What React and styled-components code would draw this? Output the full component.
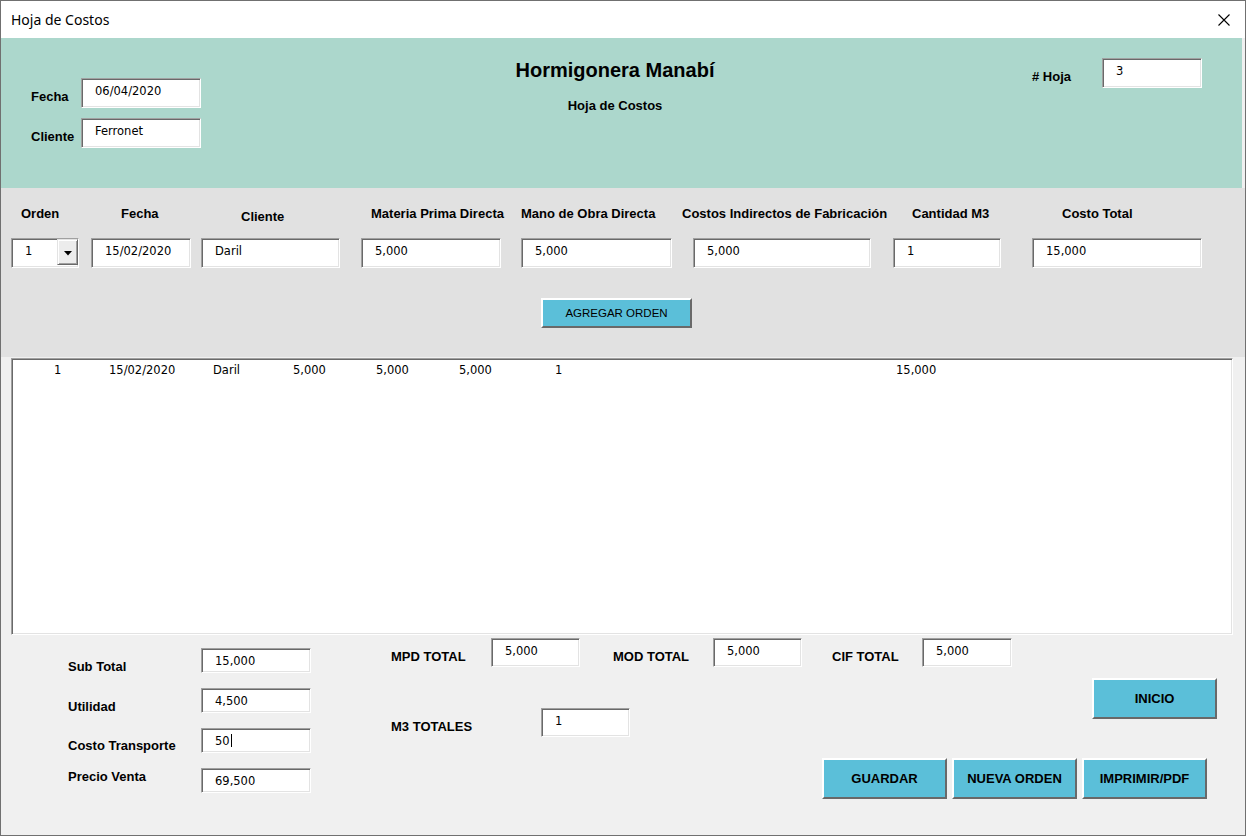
import React from "react";
import styled, { createGlobalStyle } from "styled-components";

const GlobalStyle = createGlobalStyle`
  html, body { margin: 0; padding: 0; background: #f0f0f0; }
  * { box-sizing: border-box; }
`;

const Window = styled.div`
  width: 1246px;
  height: 836px;
  border: 1px solid #707070;
  background: #f0f0f0;
  display: flex;
  flex-direction: column;
  overflow: hidden;
  font-family: "Liberation Sans", Arial, sans-serif;
  color: #000;
`;

const TitleBar = styled.div`
  height: 37px;
  flex: none;
  background: #fff;
  display: flex;
  align-items: center;
  justify-content: space-between;
  padding: 0 15px 0 10px;
  font-family: "Noto Sans", "Open Sans", sans-serif;
  font-size: 14px;
`;

const Header = styled.section`
  height: 150px;
  flex: none;
  margin-right: 3px;
  background: #acd7cc;
  display: grid;
  grid-template-columns: 300px 628px 1fr;
`;

const HeadLeft = styled.div`
  padding: 40px 0 0 30px;
  display: flex;
  flex-direction: column;
  gap: 10px;
`;

const HeadCenter = styled.div`
  padding-top: 20px;
  display: flex;
  flex-direction: column;
  align-items: center;
`;

const CompanyName = styled.h1`
  margin: 0;
  font-size: 20px;
  line-height: 24px;
  font-weight: 700;
`;

const SheetName = styled.div`
  margin-top: 16px;
  font-size: 13px;
  line-height: 15px;
  font-weight: 700;
`;

const HeadRight = styled.div`
  padding: 20px 0 0 103px;
  display: flex;
  align-items: flex-start;
`;

const Row = styled.div`
  display: flex;
  align-items: flex-start;
  height: ${(p) => (p.$h ? `${p.$h}px` : "auto")};
`;

const Label = styled.span`
  flex: none;
  width: ${(p) => (p.$w ? `${p.$w}px` : "auto")};
  margin-left: ${(p) => p.$ml || 0}px;
  padding-top: ${(p) => p.$dy ?? 11}px;
  font-size: 13px;
  line-height: 15px;
  font-weight: 700;
  white-space: nowrap;
`;

const Box = styled.div`
  flex: none;
  width: ${(p) => p.$w}px;
  height: ${(p) => p.$h || 30}px;
  margin-left: ${(p) => p.$ml || 0}px;
  background: #fff;
  border: 1px solid;
  border-color: #a0a0a0 #fff #fff #a0a0a0;
  box-shadow: inset 1px 1px 0 #696969, inset -1px -1px 0 #e3e3e3;
  padding: 0 0 ${(p) => p.$pb ?? 5}px 13px;
  display: flex;
  align-items: center;
  font-family: "DejaVu Sans", Tahoma, sans-serif;
  font-size: 11.5px;
  line-height: 14px;
  white-space: nowrap;
`;

const DropBtn = styled.span`
  align-self: flex-start;
  margin-left: auto;
  width: 21px;
  height: 26px;
  background: #ececec;
  border: 1px solid;
  border-color: #e3e3e3 #696969 #696969 #e3e3e3;
  box-shadow: inset 1px 1px 0 #fff, inset -1px -1px 0 #a0a0a0;
  display: flex;
  align-items: center;
  justify-content: center;
  padding-top: 2px;
`;

const Caret = styled.span`
  display: inline-block;
  width: 1px;
  height: 13px;
  margin-left: 1px;
  background: #000;
  vertical-align: middle;
`;

const OrderPanel = styled.section`
  height: 169px;
  flex: none;
  background: #e1e1e1;
  padding-top: 18px;
`;

const ColHeads = styled.div`
  display: flex;
  height: 15px;
  padding-left: 20px;
`;

const ColHead = styled.span`
  flex: none;
  width: ${(p) => (p.$w ? `${p.$w}px` : "auto")};
  padding-top: ${(p) => p.$dy || 0}px;
  font-size: 13px;
  line-height: 15px;
  font-weight: 700;
  white-space: nowrap;
`;

const InputsRow = styled.div`
  display: flex;
  margin-top: 17px;
`;

const AddRow = styled.div`
  display: flex;
  margin-top: 30px;
  padding-left: 540px;
`;

const Btn = styled.button`
  flex: none;
  width: ${(p) => p.$w}px;
  height: ${(p) => p.$h}px;
  margin-left: ${(p) => (p.$auto ? "auto" : "0")};
  align-self: ${(p) => (p.$top ? "flex-start" : "auto")};
  padding: 0;
  background: #5bbfd9;
  border: 2px solid;
  border-color: #fff #696969 #696969 #fff;
  font-family: "Liberation Sans", Arial, sans-serif;
  font-size: ${(p) => (p.$bold ? "13px" : "11.5px")};
  font-weight: ${(p) => (p.$bold ? 700 : 400)};
  color: #000;
  cursor: default;
`;

const ListBox = styled.div`
  flex: none;
  width: 1222px;
  height: 277px;
  margin: 1px 0 0 10px;
  background: #fff;
  border: 1px solid;
  border-color: #a0a0a0 #fff #fff #a0a0a0;
  box-shadow: inset 1px 1px 0 #696969, inset -1px -1px 0 #e3e3e3;
  padding: 4px 0 0 42px;
  font-family: "DejaVu Sans", Tahoma, sans-serif;
  font-size: 11.5px;
  line-height: 14px;
`;

const ListRow = styled.div`
  display: flex;
`;

const Cell = styled.span`
  flex: none;
  width: ${(p) => (p.$w ? `${p.$w}px` : "auto")};
  white-space: nowrap;
`;

const Footer = styled.div`
  flex: 1;
  display: flex;
`;

const Summary = styled.div`
  width: 390px;
  flex: none;
  padding: 13px 0 0 67px;
  display: flex;
  flex-direction: column;
  gap: 15px;
`;

const Totals = styled.div`
  flex: 1;
  padding: 3px 28px 0 0;
  display: flex;
  flex-direction: column;
`;

const MidRow = styled.div`
  display: flex;
  height: 59px;
  margin-top: 11px;
`;

const M3Group = styled.div`
  display: flex;
  align-items: flex-start;
  align-self: flex-end;
  height: 29px;
`;

const ActionRow = styled.div`
  display: flex;
  justify-content: flex-end;
  gap: 5px;
  margin-top: 21px;
  padding-right: 10px;
`;

const CloseIcon = () => (
  <svg width="12" height="12" viewBox="0 0 12 12" aria-hidden="true">
    <path d="M0.5 0.5 L11.5 11.5 M11.5 0.5 L0.5 11.5" stroke="#000" strokeWidth="1.1" fill="none" />
  </svg>
);

const DownArrow = () => (
  <svg width="8" height="5" viewBox="0 0 8 5" aria-hidden="true">
    <path d="M0 0 H8 L4 4.5 Z" fill="#000" />
  </svg>
);

const headers = [
  { t: "Orden", w: 100 },
  { t: "Fecha", w: 120 },
  { t: "Cliente", w: 130, dy: 3 },
  { t: "Materia Prima Directa", w: 150 },
  { t: "Mano de Obra Directa", w: 161 },
  { t: "Costos Indirectos de Fabricación", w: 230 },
  { t: "Cantidad M3", w: 150 },
  { t: "Costo Total" },
];

const inputs = [
  { v: "15/02/2020", w: 100, ml: 12 },
  { v: "Daril", w: 139, ml: 10 },
  { v: "5,000", w: 140, ml: 21 },
  { v: "5,000", w: 151, ml: 20 },
  { v: "5,000", w: 178, ml: 21 },
  { v: "1", w: 108, ml: 22 },
  { v: "15,000", w: 170, ml: 31 },
];

const listCells = [
  { v: "1", w: 55 },
  { v: "15/02/2020", w: 104 },
  { v: "Daril", w: 80 },
  { v: "5,000", w: 83 },
  { v: "5,000", w: 83 },
  { v: "5,000", w: 96 },
  { v: "1", w: 341 },
  { v: "15,000" },
];

const summary = [
  { l: "Sub Total", v: "15,000", dy: 11 },
  { l: "Utilidad", v: "4,500", dy: 11 },
  { l: "Costo Transporte", v: "50", dy: 10, caret: true },
  { l: "Precio Venta", v: "69,500", dy: 1 },
];

export default function App() {
  return (
    <>
      <GlobalStyle />
      <Window>
        <TitleBar>
          <span>Hoja de Costos</span>
          <CloseIcon />
        </TitleBar>

        <Header>
          <HeadLeft>
            <Row>
              <Label $w={50}>Fecha</Label>
              <Box $w={120}>06/04/2020</Box>
            </Row>
            <Row>
              <Label $w={50}>Cliente</Label>
              <Box $w={120}>Ferronet</Box>
            </Row>
          </HeadLeft>
          <HeadCenter>
            <CompanyName>Hormigonera Manabí</CompanyName>
            <SheetName>Hoja de Costos</SheetName>
          </HeadCenter>
          <HeadRight>
            <Label $w={70}># Hoja</Label>
            <Box $w={100} $h={30}>3</Box>
          </HeadRight>
        </Header>

        <OrderPanel>
          <ColHeads>
            {headers.map((h) => (
              <ColHead key={h.t} $w={h.w} $dy={h.dy}>
                {h.t}
              </ColHead>
            ))}
          </ColHeads>
          <InputsRow>
            <Box $w={68} $ml={10}>
              1
              <DropBtn>
                <DownArrow />
              </DropBtn>
            </Box>
            {inputs.map((f, i) => (
              <Box key={i} $w={f.w} $ml={f.ml}>
                {f.v}
              </Box>
            ))}
          </InputsRow>
          <AddRow>
            <Btn $w={151} $h={30}>AGREGAR ORDEN</Btn>
          </AddRow>
        </OrderPanel>

        <ListBox>
          <ListRow>
            {listCells.map((c, i) => (
              <Cell key={i} $w={c.w}>
                {c.v}
              </Cell>
            ))}
          </ListRow>
        </ListBox>

        <Footer>
          <Summary>
            {summary.map((s) => (
              <Row key={s.l} $h={25}>
                <Label $w={133} $dy={s.dy}>{s.l}</Label>
                <Box $w={110} $h={25} $pb={0}>
                  {s.v}
                  {s.caret && <Caret />}
                </Box>
              </Row>
            ))}
          </Summary>

          <Totals>
            <Row $h={29}>
              <Label $w={100}>MPD TOTAL</Label>
              <Box $w={89} $h={29} $pb={4}>5,000</Box>
              <Label $w={100} $ml={33}>MOD TOTAL</Label>
              <Box $w={89} $h={29} $pb={4}>5,000</Box>
              <Label $w={90} $ml={30}>CIF TOTAL</Label>
              <Box $w={90} $h={29} $pb={4}>5,000</Box>
            </Row>
            <MidRow>
              <M3Group>
                <Label $w={150}>M3 TOTALES</Label>
                <Box $w={89} $h={29} $pb={3}>1</Box>
              </M3Group>
              <Btn $w={125} $h={41} $bold $auto $top>
                INICIO
              </Btn>
            </MidRow>
            <ActionRow>
              <Btn $w={125} $h={41} $bold>GUARDAR</Btn>
              <Btn $w={125} $h={41} $bold>NUEVA ORDEN</Btn>
              <Btn $w={125} $h={41} $bold>IMPRIMIR/PDF</Btn>
            </ActionRow>
          </Totals>
        </Footer>
      </Window>
    </>
  );
}
